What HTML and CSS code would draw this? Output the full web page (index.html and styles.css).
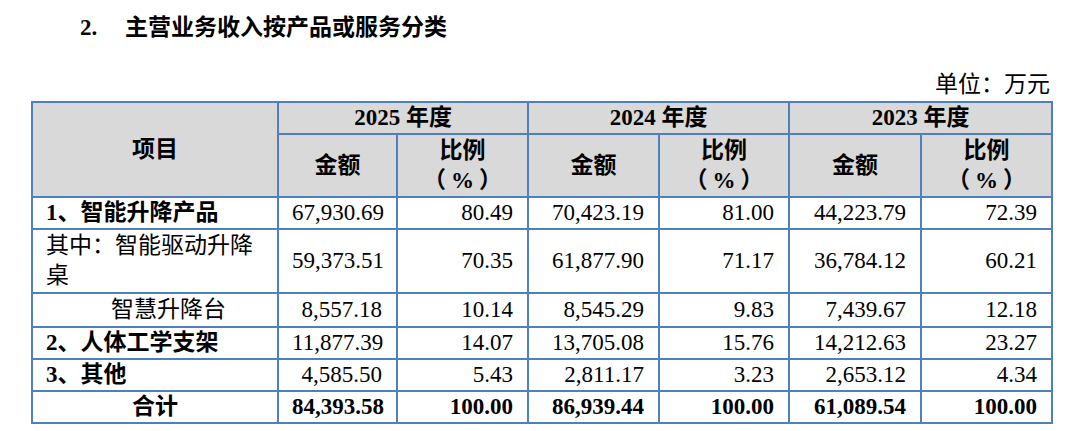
FILE: index.html
```html
<!DOCTYPE html>
<html lang="zh-CN">
<head>
<meta charset="utf-8">
<title>主营业务收入按产品或服务分类</title>
<link rel="stylesheet" href="styles.css">
</head>
<body>
<div class="page">
  <h2 class="title"><span class="num">2.</span><span class="text">主营业务收入按产品或服务分类</span></h2>
  <div class="unit">单位：万元</div>
  <table class="data">
    <colgroup>
      <col class="c-item">
      <col class="c-amt1">
      <col class="c-w">
      <col class="c-w">
      <col class="c-w2">
      <col class="c-w3">
      <col class="c-w">
    </colgroup>
    <thead>
      <tr class="h1">
        <th rowspan="2" class="item-h">项目</th>
        <th colspan="2">2025 年度</th>
        <th colspan="2">2024 年度</th>
        <th colspan="2">2023 年度</th>
      </tr>
      <tr class="h2">
        <th>金额</th><th>比例<br>（<span class="pct">%</span>）</th>
        <th>金额</th><th>比例<br>（<span class="pct">%</span>）</th>
        <th>金额</th><th>比例<br>（<span class="pct">%</span>）</th>
      </tr>
    </thead>
    <tbody>
      <tr class="r">
        <td class="label bold">1、智能升降产品</td>
        <td>67,930.69</td><td>80.49</td>
        <td>70,423.19</td><td>81.00</td>
        <td>44,223.79</td><td>72.39</td>
      </tr>
      <tr class="r2">
        <td class="label">其中：智能驱动升降桌</td>
        <td>59,373.51</td><td>70.35</td>
        <td>61,877.90</td><td>71.17</td>
        <td>36,784.12</td><td>60.21</td>
      </tr>
      <tr class="r3">
        <td class="label sub">智慧升降台</td>
        <td>8,557.18</td><td>10.14</td>
        <td>8,545.29</td><td>9.83</td>
        <td>7,439.67</td><td>12.18</td>
      </tr>
      <tr class="r">
        <td class="label bold">2、人体工学支架</td>
        <td>11,877.39</td><td>14.07</td>
        <td>13,705.08</td><td>15.76</td>
        <td>14,212.63</td><td>23.27</td>
      </tr>
      <tr class="r">
        <td class="label bold">3、其他</td>
        <td>4,585.50</td><td>5.43</td>
        <td>2,811.17</td><td>3.23</td>
        <td>2,653.12</td><td>4.34</td>
      </tr>
      <tr class="r total">
        <td class="label center">合计</td>
        <td>84,393.58</td><td>100.00</td>
        <td>86,939.44</td><td>100.00</td>
        <td>61,089.54</td><td>100.00</td>
      </tr>
    </tbody>
  </table>
</div>
</body>
</html>
```

FILE: styles.css
```css
html, body {
  margin: 0;
  padding: 0;
  background: #ffffff;
}

body {
  font-family: "Liberation Serif", "Noto Sans CJK SC", serif;
  color: #000000;
  font-size: 23px;
}

.page {
  width: 1079px;
  padding-top: 13px;
}

.title {
  margin: 0;
  display: flex;
  align-items: center;
  padding-left: 80px;
  font-size: 23px;
  line-height: 30px;
  font-weight: bold;
}

.title .num {
  width: 45px;
}

.unit {
  margin-top: 27px;
  text-align: right;
  padding-right: 29px;
  line-height: 30px;
  height: 30px;
}

.data {
  margin-top: 1px;
  margin-left: 31px;
  width: 1020px;
  border-collapse: collapse;
  table-layout: fixed;
}

.c-item { width: 246px; }
.c-amt1 { width: 119px; }
.c-w { width: 131px; }
.c-w2 { width: 130px; }
.c-w3 { width: 132px; }

.data th,
.data td {
  border: 2px solid #4f7fbd;
  padding: 0 14px 0 13px;
  line-height: 30px;
  vertical-align: middle;
}

.data th {
  background: #d9d9d9;
  font-weight: bold;
  text-align: center;
  padding: 0;
}

.pct {
  margin: 0 5px;
}

.h1 th { height: 29px; }
.h2 th { height: 61px; }

.data td {
  text-align: right;
  white-space: nowrap;
}

.data td.label {
  text-align: left;
  white-space: normal;
}

.data td.sub {
  padding-left: 78px;
}

.data td.center {
  text-align: center;
  padding-left: 0;
  padding-right: 0;
}

.bold { font-weight: bold; }

.r td { height: 30px; }
.r2 td { height: 62px; }
.r3 td { height: 32px; }

.total td { font-weight: bold; }
```
